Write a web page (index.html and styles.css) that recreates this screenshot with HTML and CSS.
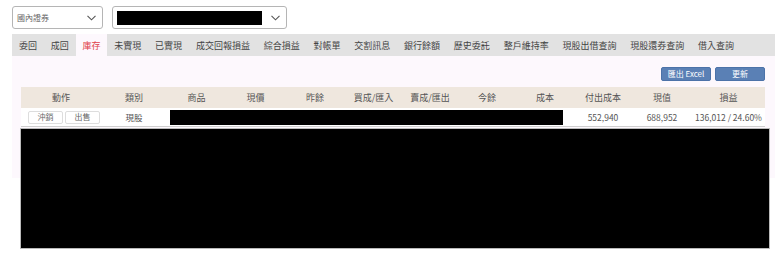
FILE: index.html
```html
<!DOCTYPE html>
<html lang="zh-Hant">
<head>
<meta charset="utf-8">
<link rel="stylesheet" href="styles.css">
</head>
<body>
<div class="selects">
  <div class="select s1">
    <span class="sel-text">國內證券</span>
    <svg class="chev" width="9" height="6" viewBox="0 0 9 6"><path d="M0.5 0.8 L4.5 4.8 L8.5 0.8" fill="none" stroke="#555" stroke-width="1.1"/></svg>
  </div>
  <div class="select s2">
    <span class="redact-sel"></span>
    <svg class="chev" width="9" height="6" viewBox="0 0 9 6"><path d="M0.5 0.8 L4.5 4.8 L8.5 0.8" fill="none" stroke="#555" stroke-width="1.1"/></svg>
  </div>
</div>
<div class="tabs">
  <span class="tab">委回</span>
  <span class="tab">成回</span>
  <span class="tab active">庫存</span>
  <span class="tab">未實現</span>
  <span class="tab">已實現</span>
  <span class="tab">成交回報損益</span>
  <span class="tab">綜合損益</span>
  <span class="tab">對帳單</span>
  <span class="tab">交割訊息</span>
  <span class="tab">銀行餘額</span>
  <span class="tab">歷史委託</span>
  <span class="tab">整戶維持率</span>
  <span class="tab">現股出借查詢</span>
  <span class="tab">現股還券查詢</span>
  <span class="tab">借入查詢</span>
</div>
<div class="panel">
  <div class="actions">
    <span class="btn">匯出 Excel</span>
    <span class="btn">更新</span>
  </div>
  <div class="table">
    <div class="row head">
      <span>動作</span><span>類別</span><span>商品</span><span>現價</span><span>昨餘</span><span>買成/匯入</span><span>賣成/匯出</span><span>今餘</span><span>成本</span><span>付出成本</span><span>現值</span><span>損益</span>
    </div>
    <div class="row data">
      <span class="ops"><span class="mini">沖銷</span><span class="mini">出售</span></span>
      <span>現股</span>
      <span class="redact-cell"></span>
      <span>552,940</span><span>688,952</span><span>136,012 / 24.60%</span>
    </div>
    <div class="redact-block"></div>
  </div>
</div>
</body>
</html>
```
FILE: styles.css
```css
* { box-sizing: border-box; }
body {
  margin: 0;
  padding: 6px 5px 0 12px;
  background: #fff;
  font-family: "Noto Sans CJK TC", "Noto Sans", sans-serif;
  color: #555;
  font-size: 9px;
}
.selects {
  display: flex;
  gap: 9px;
  height: 23px;
}
.select {
  position: relative;
  display: flex;
  align-items: center;
  height: 23px;
  border: 1px solid #b5b5b5;
  border-radius: 3px;
  background: #fff;
  padding-left: 4px;
}
.s1 { width: 91px; }
.s2 { width: 175px; }
.sel-text { font-size: 8px; color: #666; }
.chev { position: absolute; right: 6px; top: 8px; }
.redact-sel {
  display: block;
  width: 145px;
  height: 14px;
  background: #000;
}
.tabs {
  margin-top: 5px;
  display: flex;
  height: 22px;
  background: #e2e2e2;
}
.tab {
  display: flex;
  align-items: center;
  padding: 0 6.9px;
  font-size: 9px;
  color: #444;
  line-height: 1;
}
.tab.active {
  background: #fdf8fd;
  color: #e0414b;
}
.panel {
  background: linear-gradient(#fdf8fd, #fdf8fd) no-repeat;
  background-size: 100% 122px;
  padding: 11px 10px 14px 9px;
}
.actions {
  display: flex;
  justify-content: flex-end;
  gap: 4px;
  height: 14px;
}
.btn {
  width: 50px;
  height: 14px;
  background: #5a80b5;
  border: 1px solid #4c72a8;
  border-radius: 2px;
  color: #fff;
  font-size: 8px;
  display: flex;
  align-items: center;
  justify-content: center;
  line-height: 1;
}
.table { margin-top: 6px; }
.row {
  display: grid;
  grid-template-columns: 80px 66px 59px 59px 60px 57px 56px 58px 58px 58px 60px 73px;
  align-items: center;
}
.row span { text-align: center; line-height: 1; }
.head {
  height: 21px;
  background: #efe7de;
  color: #555;
}
.data {
  height: 19px;
  background: #fff;
  border-bottom: 1px solid #cfcfcf;
  font-size: 8.5px;
}
.ops {
  display: flex;
  gap: 2px;
  padding-left: 7px;
}
.mini {
  width: 35px;
  height: 13px;
  border: 1px solid #ddd;
  border-radius: 2px;
  background: #fff;
  display: flex;
  align-items: center;
  justify-content: center;
  font-size: 8px;
  color: #666;
}
.redact-cell {
  grid-column: 3 / 10;
  height: 15px;
  background: #000;
  margin-left: 3px;
  margin-right: 11px;
}
.redact-block {
  margin: 1px -5px 0 -1px;
  height: 121px;
  background: #000;
  border: 1px solid #bbb;
}
```
